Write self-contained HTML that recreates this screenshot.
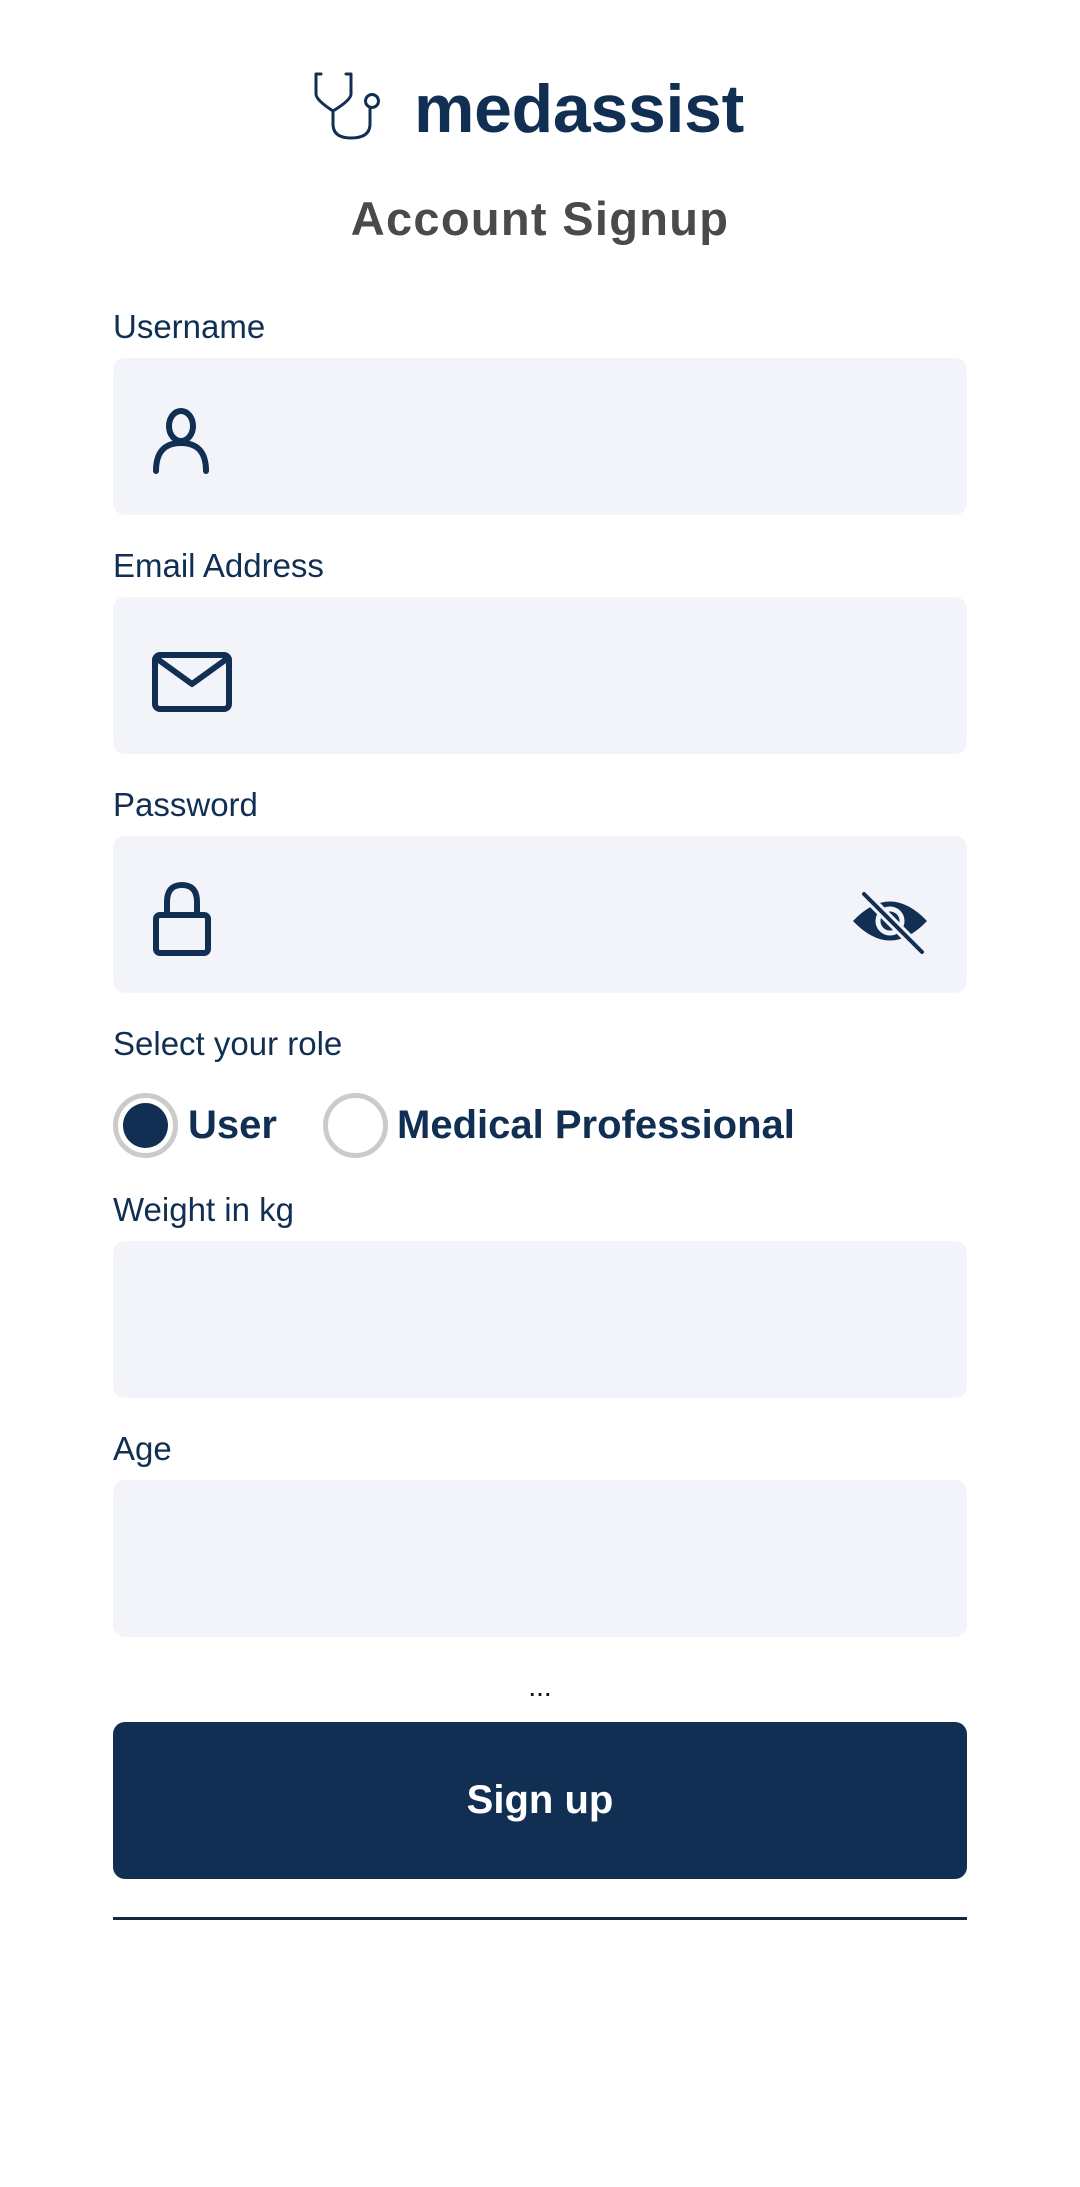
<!DOCTYPE html>
<html><head><meta charset="utf-8"><style>
*{margin:0;padding:0;box-sizing:border-box}
body{width:1080px;height:2187px;background:#fff;position:relative;font-family:"Liberation Sans",sans-serif;color:#112f53;overflow:hidden}
.abs{position:absolute}
.lbl{position:absolute;left:113px;font-size:33px;line-height:40px;color:#112f53}
.fld{position:absolute;left:113px;width:854px;height:157px;background:#f3f4f9;border-radius:12px}
</style></head><body>
<svg class="abs" style="left:300px;top:60px" width="90" height="90" viewBox="300 60 90 90" fill="none" stroke="#112f53" stroke-width="3" stroke-linecap="round" stroke-linejoin="round">
<path d="M321 74 H316 V94 Q316 100 333 111 Q351 100 351 94 V74 H346"/>
<path d="M333 111 V124 Q333 138 351 138 Q370 138 370 124 V108"/>
<circle cx="372" cy="101" r="6.5"/>
</svg>
<div class="abs" style="left:414px;top:64px;font-size:68px;font-weight:bold;letter-spacing:-0.3px;line-height:90px;color:#112f53">medassist</div>
<div class="abs" style="left:0;width:1080px;text-align:center;top:191px;font-size:47px;font-weight:bold;letter-spacing:1.3px;line-height:56px;color:#4a4a4a">Account Signup</div>

<div class="lbl" style="top:307px">Username</div>
<div class="fld" style="top:358px"></div>
<svg class="abs" style="left:150px;top:405px" width="64" height="70" viewBox="0 0 64 70" fill="none" stroke="#112f53" stroke-width="6" stroke-linecap="round">
<ellipse cx="31" cy="21" rx="12" ry="15"/><path d="M6 66 Q6 38 31 38 Q56 38 56 66"/>
</svg>

<div class="lbl" style="top:546px">Email Address</div>
<div class="fld" style="top:597px"></div>
<svg class="abs" style="left:150px;top:650px" width="84" height="64" viewBox="0 0 84 64" fill="none" stroke="#112f53" stroke-width="6" stroke-linejoin="round">
<rect x="5" y="5" width="74" height="54" rx="5"/><path d="M6 8 L42 34 L78 8"/>
</svg>

<div class="lbl" style="top:785px">Password</div>
<div class="fld" style="top:836px"></div>
<svg class="abs" style="left:150px;top:880px" width="64" height="80" viewBox="0 0 64 80" fill="none" stroke="#112f53" stroke-width="6">
<path d="M17 35 V22 Q17 5 32 5 Q47 5 47 22 V35"/><rect x="6" y="35" width="52" height="38" rx="4"/>
</svg>
<svg class="abs" style="left:850px;top:890px" width="80" height="64" viewBox="0 0 80 64">
<path d="M3 31 Q40 -8 77 31 Q40 70 3 31Z" fill="#112f53"/>
<circle cx="40" cy="31" r="12" fill="none" stroke="#f3f4f9" stroke-width="5"/>
<path d="M14 4 L72 62" stroke="#f3f4f9" stroke-width="10"/>
<path d="M14 4 L72 62" stroke="#112f53" stroke-width="4" stroke-linecap="round"/>
</svg>

<div class="lbl" style="top:1024px">Select your role</div>
<div class="abs" style="left:113px;top:1093px;width:65px;height:65px;border-radius:50%;border:5px solid #cbcbcb"></div>
<div class="abs" style="left:123px;top:1103px;width:45px;height:45px;border-radius:50%;background:#112f53"></div>
<div class="abs" style="left:188px;top:1100px;font-size:40px;font-weight:bold;line-height:50px">User</div>
<div class="abs" style="left:323px;top:1093px;width:65px;height:65px;border-radius:50%;border:5px solid #cbcbcb"></div>
<div class="abs" style="left:397px;top:1100px;font-size:40px;font-weight:bold;line-height:50px;letter-spacing:0px">Medical Professional</div>

<div class="lbl" style="top:1190px">Weight in kg</div>
<div class="fld" style="top:1241px"></div>
<div class="lbl" style="top:1429px">Age</div>
<div class="fld" style="top:1480px"></div>

<div class="abs" style="left:0;width:1080px;text-align:center;top:1672px;font-size:28px;line-height:30px;color:#111">...</div>
<div class="abs" style="left:113px;top:1722px;width:854px;height:157px;background:#112f53;border-radius:12px;color:#fff;font-size:40px;font-weight:bold;text-align:center;line-height:157px">Sign up</div>
<div class="abs" style="left:113px;top:1917px;width:854px;height:3px;background:#13283f"></div>
</body></html>
